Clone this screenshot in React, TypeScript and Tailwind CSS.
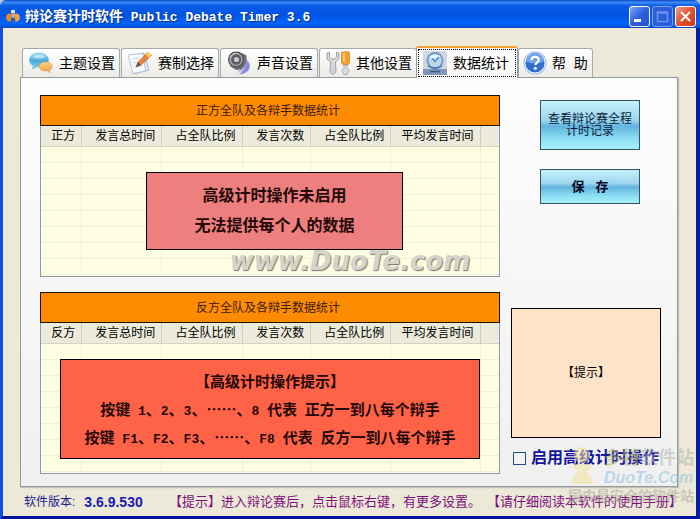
import type { ReactNode } from "react";

type TabDef = {
  id: string;
  label: string;
  icon: ReactNode;
};

const TABS: TabDef[] = [
  { id: "theme", label: "主题设置", icon: <ChatIcon /> },
  { id: "format", label: "赛制选择", icon: <NoteIcon /> },
  { id: "sound", label: "声音设置", icon: <SpeakerIcon /> },
  { id: "other", label: "其他设置", icon: <ToolsIcon /> },
  { id: "stats", label: "数据统计", icon: <ClockIcon /> },
  { id: "help", label: "帮  助", icon: <HelpIcon /> },
];

const ACTIVE_TAB = "stats";

const COLUMNS = ["发言总时间", "占全队比例", "发言次数", "占全队比例", "平均发言时间"];

function ChatIcon() {
  return (
    <svg viewBox="0 0 24 24" className="size-6 shrink-0" aria-hidden="true">
      <defs>
        <linearGradient id="chat-a" x1="0" y1="0" x2="0" y2="1">
          <stop offset="0" stopColor="#a8e2fa" />
          <stop offset="0.5" stopColor="#47a9dc" />
          <stop offset="1" stopColor="#8fd4f2" />
        </linearGradient>
        <linearGradient id="chat-b" x1="0" y1="0" x2="0" y2="1">
          <stop offset="0" stopColor="#fbd08a" />
          <stop offset="1" stopColor="#ec9a3c" />
        </linearGradient>
      </defs>
      <path d="M10 2C4.500 2 .5 5 .5 9c0 2.500 1.500 4.500 4 5.800L3.500 18l4.500-2.300c6.500.8 11.500-2 11.500-6.700C19.500 5 15.500 2 10 2z" fill="url(#chat-a)" stroke="#5fb0d6" strokeWidth=".6" />
      <path d="M4 6c2-2.500 9-3.500 12 0-3 2-9 2-12 0z" fill="#fff" opacity=".45" />
      <path d="M17 11c-4 0-7 2-7 4.500S13 20 17 20l1.500-.1 2.500 2.300-.3-3c1.500-.8 2.600-2.100 2.600-3.700C23.300 13 21 11 17 11z" fill="url(#chat-b)" stroke="#d99b50" strokeWidth=".5" />
    </svg>
  );
}

function NoteIcon() {
  return (
    <svg viewBox="0 0 24 24" className="size-6 shrink-0" aria-hidden="true">
      <path d="M1 5l15-3 5 17-15 4z" fill="#dfe8f6" stroke="#9aacc9" strokeWidth=".8" />
      <path d="M0 4l15-1.500L17.500 20 5 22.500z" fill="#f7faff" stroke="#a9b6ce" strokeWidth=".8" />
      <path d="M4 8l8-1M5 12l8-1M6 16l8-1" stroke="#cfdaec" strokeWidth="1" />
      <path d="M8 16l2-5L19.500 1.500l4 3L13 14z" fill="#e8853a" stroke="#b9602a" strokeWidth=".6" />
      <path d="M17.500 3.500l2-2 4 3-2.300 2.200z" fill="#f4d14e" />
      <path d="M8 16l2-5 3 3z" fill="#6b4a3a" />
    </svg>
  );
}

function SpeakerIcon() {
  return (
    <svg viewBox="0 0 24 24" className="size-6 shrink-0" aria-hidden="true">
      <path d="M20 9c5 5 4 13-8 14.500 4-3 6-7 8-14.500z" fill="#8d8ad8" />
      <path d="M17 10c3 4 1 10-7 12 3-3 5-6 7-12z" fill="#b9b6ee" />
      <path d="M11 .5l8 3.500c2 5 0 11-5 14.500L9 19 3 15z" fill="#6e6e72" />
      <ellipse cx="9" cy="8.500" rx="8" ry="8" fill="#4c4d51" />
      <ellipse cx="9" cy="8.500" rx="6.800" ry="6.800" fill="#a3a5a9" />
      <ellipse cx="9.200" cy="8.500" rx="5" ry="5.400" fill="#5c5d62" />
      <circle cx="9.500" cy="8.500" r="2.600" fill="#c9cbcf" />
      <path d="M3 7c1-3 4-5 8-4.500" stroke="#dcdde0" strokeWidth="1" fill="none" />
    </svg>
  );
}

function ToolsIcon() {
  return (
    <svg viewBox="0 0 24 24" className="size-6 shrink-0" aria-hidden="true">
      <path d="M1 2v6l3.500 3L4 20c0 4 6 4 6 0l-.5-9L13 8V2l-2.500-1v5L8.500 8h-3L3.500 6V1z" fill="#d5d8dc" stroke="#8e9399" strokeWidth=".8" />
      <circle cx="7" cy="19.500" r="1.200" fill="#fff" stroke="#8e9399" strokeWidth=".5" />
      <path d="M15.500 1.500c0-1 8-1 8 0V10c0 3-1.500 4-2.500 4h-3c-1 0-2.500-1-2.500-4z" fill="#f5a02a" stroke="#cf7a17" strokeWidth=".7" />
      <path d="M18 2v9" stroke="#ffd98e" strokeWidth="1.500" />
      <path d="M18 14h3v3l2 2.500-2 4h-3l-2-4 2-2.500z" fill="#dcdfe3" stroke="#90959b" strokeWidth=".7" />
    </svg>
  );
}

function ClockIcon() {
  return (
    <svg viewBox="0 0 24 24" className="size-6 shrink-0" aria-hidden="true">
      <rect width="24" height="24" rx="1" fill="#cfd6de" />
      <path d="M0 18h24v6H0z" fill="#7e97b8" />
      <path d="M7 20.500h10" stroke="#3c5880" strokeWidth="1.500" />
      <circle cx="12" cy="9.500" r="8.500" fill="#6c9ccc" />
      <circle cx="12" cy="9.500" r="6.600" fill="#b9d8ee" />
      <path d="M6 7c2-4 9-5 12-1-4 1-8 1-12 1z" fill="#e8f5fc" />
      <path d="M9 7.500l3 3 4-4.500" stroke="#5585b8" strokeWidth="1.300" fill="none" />
      <path d="M5 15c4 3 10 3 14 0" stroke="#47739f" strokeWidth="1.500" fill="none" />
    </svg>
  );
}

function HelpIcon() {
  return (
    <svg viewBox="0 0 24 24" className="size-6 shrink-0" aria-hidden="true">
      <circle cx="12" cy="12" r="11.500" fill="#9fbde6" />
      <circle cx="12" cy="12" r="10.500" fill="#fff" />
      <circle cx="12" cy="12" r="9.600" fill="#2f6fd0" />
      <path d="M3 10.500a9 9 0 0118 0c-5 2.500-13 2.500-18 0z" fill="#6fa4ea" />
      <path d="M8.500 9.300c.2-4.600 7.300-4.300 7.200-.3 0 2.500-3.300 2.600-3.300 5" stroke="#fff" strokeWidth="2.300" fill="none" />
      <circle cx="12.300" cy="17.300" r="1.500" fill="#fff" />
    </svg>
  );
}

function AppIcon() {
  return (
    <svg viewBox="0 0 14 14" className="size-3.5 shrink-0" aria-hidden="true">
      <path d="M5 1h4v3H5z" fill="#d9e2f0" />
      <circle cx="4" cy="8.500" r="3.900" fill="#e88a2c" />
      <circle cx="10" cy="8.500" r="3.900" fill="#f0a04a" />
      <path d="M7 3l2.500 9H4.500z" fill="#2e5fae" />
      <path d="M6.500 4h1.200v5H6.500z" fill="#dfeaf8" />
    </svg>
  );
}

/* 汉字与西文字号不同，按字符类型拆开 */
function MixedText({ text }: { text: string }) {
  return (
    <>
      {text.split(/([ -~]+)/).map((part, i) =>
        i % 2 === 1 ? (
          <span key={i} className="whitespace-pre font-['Liberation_Mono',monospace] text-[13px] leading-none">
            {part}
          </span>
        ) : (
          part
        ),
      )}
    </>
  );
}

function TitleBar() {
  const button = "flex size-[21px] items-center justify-center rounded-[3px] border border-white";
  return (
    <header className="flex h-7 items-center rounded-t-md bg-[linear-gradient(#0846c8_0%,#3f8cf6_8%,#0b5ce6_20%,#0054e3_55%,#0465fc_85%,#0347c9_100%)] pt-1 pr-1 pl-1.5">
      <AppIcon />
      <h1 className="ml-[5px] flex-1 truncate text-sm leading-6 font-bold text-white [text-shadow:1px_1px_1px_#0a2a80]">
        <MixedText text="辩论赛计时软件 Public Debate Timer 3.6" />
      </h1>
      <div className="flex gap-0.5">
        <button type="button" aria-label="最小化" className={`${button} bg-[linear-gradient(135deg,#7fa6f5,#2a5fe0_50%,#2453cf)]`}>
          <svg viewBox="0 0 19 19" className="size-full">
            <path d="M4 12h7v3H4z" fill="#fff" />
          </svg>
        </button>
        <button type="button" aria-label="最大化" disabled className="flex size-[21px] items-center justify-center rounded-[3px] border border-[#7f9fe6] bg-[#2a5cdc]">
          <svg viewBox="0 0 19 19" className="size-full">
            <path d="M4.500 5h10v9.500h-10zM4 6h11" fill="none" stroke="#6d92e8" strokeWidth="1.500" />
          </svg>
        </button>
        <button type="button" aria-label="关闭" className={`${button} bg-[linear-gradient(135deg,#f0a08a,#df5230_50%,#c93e1c)]`}>
          <svg viewBox="0 0 19 19" className="size-full">
            <path d="M5 5l9 9M14 5l-9 9" stroke="#fff" strokeWidth="2" />
          </svg>
        </button>
      </div>
    </header>
  );
}

function TabBar() {
  return (
    <div role="tablist" className="flex h-[31px] items-end pl-0.5">
      {TABS.map((tab) =>
        tab.id === ACTIVE_TAB ? (
          <button
            key={tab.id}
            type="button"
            role="tab"
            aria-selected="true"
            className="relative -mb-px -ml-0.5 flex h-8 items-stretch rounded-t-[3px] border-x border-t-2 border-x-[#919b9c] border-t-[#f0a030] bg-[#fcfcfc] p-px"
          >
            <span className="flex items-center gap-1.5 border border-dotted border-black px-1 pr-1.5 text-sm whitespace-pre">
              {tab.icon}
              {tab.label}
            </span>
          </button>
        ) : (
          <button
            key={tab.id}
            type="button"
            role="tab"
            aria-selected="false"
            className="mr-px flex h-[29px] items-center gap-1.5 rounded-t-[3px] border border-b-0 border-[#a3aaab] bg-linear-to-b from-white to-[#ecebe6] pr-1 pl-1.5 text-sm whitespace-pre last:mr-0 last:gap-[5px] last:pl-1"
          >
            {tab.icon}
            {tab.label}
          </button>
        ),
      )}
    </div>
  );
}

function StatsTable({
  side,
  title,
  children,
}: {
  side: string;
  title: string;
  children: ReactNode;
}) {
  return (
    <section className="relative">
      <h2 className="flex h-[31px] items-center justify-center border border-[#1c1008] bg-[#ff8c00] pr-1 text-xs text-[#3a1a10]">
        {title}
      </h2>
      <div className="border border-t-0 border-[#8a9aa8] bg-[#fdfee2] pb-px">
        <table className="w-full table-fixed border-separate border-spacing-0 text-xs">
          <colgroup>
            <col className="w-[9%]" />
            <col className="w-[17.500%]" />
            <col className="w-[17.500%]" />
            <col className="w-[15%]" />
            <col className="w-[17.500%]" />
            <col className="w-[19.500%]" />
            <col />
          </colgroup>
          <thead>
            <tr className="h-[21px] bg-[#ebeadb]">
              {[side, ...COLUMNS].map((name, i) => (
                <th key={i} className="border-r border-b border-r-[#cfcdbd] border-b-[#d6d3c0] p-0 pr-1.5 text-right leading-5 font-normal whitespace-nowrap">
                  {name}
                </th>
              ))}
              <td className="border-b border-[#d6d3c0] p-0" />
            </tr>
          </thead>
          <tbody>
            {Array.from({ length: 8 }, (_, row) => (
              <tr key={row} className="h-4">
                {Array.from({ length: 7 }, (_, col) => (
                  <td key={col} className="border-r border-b border-[#f0f0d8] p-0 last:border-r-0" />
                ))}
              </tr>
            ))}
          </tbody>
        </table>
      </div>
      {children}
    </section>
  );
}

function SiteMark() {
  return (
    <div className="pointer-events-none absolute right-1.5 bottom-3.5 flex flex-col items-end opacity-55" aria-hidden="true">
      <div className="flex items-center gap-2">
        <svg viewBox="0 0 26 40" className="h-10 w-7">
          <circle cx="13" cy="9" r="8" fill="#f3e3a0" />
          <path d="M2 38c0-6 4-9 7-13-4-1-5-4-5-7h18c0 3-1 6-5 7 3 4 7 7 7 13z" fill="#f3e3a0" />
        </svg>
        <div className="flex flex-col">
          <span className="text-lg leading-6 font-bold text-[#b5b5ad]">
            <span className="text-[#b9b96c]">多特</span>软件站
          </span>
          <span className="text-base leading-4 font-bold text-[#8fc3e0] italic">DuoTe.Com</span>
        </div>
      </div>
      <span className="text-sm leading-5 font-bold text-[#aaa9a2]">国内最安全的软件站</span>
    </div>
  );
}

export default function App() {
  return (
    <div
      lang="zh-CN"
      className="relative flex min-h-screen flex-col bg-[#b9c6dc] font-['Liberation_Sans','Noto_Sans_CJK_SC',sans-serif] text-black"
    >
      <TitleBar />
      <main className="flex flex-1 flex-col border-r-4 border-b-4 border-l-[3px] border-r-[#0a1f9c] border-b-[#00129a] border-l-[#0f4fdc] bg-[#ece9d8] pt-[18px] pr-[18px] pl-[17px]">
        <TabBar />
        <div className="flex flex-1 gap-[11px] border border-[#919b9c] bg-linear-to-b from-[#fdfdfd] to-[#f0f0f0] pt-[17px] pr-4 pb-3 pl-[19px] shadow-[1px_1px_1px_#c4c1b2]">
          <div className="flex min-w-0 flex-1 flex-col gap-[15px]">
            <StatsTable side="正方" title="正方全队及各辩手数据统计">
              <p className="absolute top-[77px] right-[21%] left-[23%] flex flex-col items-center border border-black bg-[#ee7f7f] py-2 text-base leading-[30px] font-bold whitespace-nowrap text-[#240808]">
                <span>高级计时操作未启用</span>
                <span>无法提供每个人的数据</span>
              </p>
              <p className="pointer-events-none absolute inset-x-0 bottom-0 pl-40 text-center font-['DejaVu_Sans',sans-serif] text-[26px] leading-8 font-bold text-[#d4d4cc] italic [text-shadow:1px_1px_1px_#77776f]">
                www.DuoTe.com
              </p>
            </StatsTable>
            <StatsTable side="反方" title="反方全队及各辩手数据统计">
              <p className="absolute inset-x-5 top-[67px] flex flex-col items-center border border-black bg-[#ff6347] py-[7px] font-['Noto_Sans_CJK_SC',sans-serif] text-[15px] leading-7 font-bold whitespace-nowrap text-[#240808]">
                <span>【高级计时操作提示】</span>
                <span>
                  <MixedText text="按键 1、2、3、……、8 代表 正方一到八每个辩手" />
                </span>
                <span>
                  <MixedText text="按键 F1、F2、F3、……、F8 代表 反方一到八每个辩手" />
                </span>
              </p>
            </StatsTable>
          </div>
          <aside className="flex w-[150px] shrink-0 flex-col pt-[5px]">
            <button
              type="button"
              className="ml-[29px] h-[50px] w-[100px] border border-[#35535f] bg-[linear-gradient(#c4f0fb_0%,#9fd6ef_40%,#62b4de_52%,#8fe0f5_80%,#a5f0fc_100%)] text-xs leading-3 text-[#0c1c3c]"
            >
              查看辩论赛全程
              <br />
              计时记录
            </button>
            <button
              type="button"
              className="mt-[19px] ml-[29px] h-[35px] w-[100px] border border-[#35535f] bg-[linear-gradient(#c4f0fb_0%,#9fd6ef_40%,#62b4de_52%,#8fe0f5_80%,#a5f0fc_100%)] text-[13px] font-bold whitespace-pre text-[#04081c]"
            >
              保   存
            </button>
            <div className="mt-auto flex h-[130px] items-center justify-center border border-black bg-[#fde4c8] text-xs">
              【提示】
            </div>
            <label className="mt-2 mb-1 flex items-center gap-[5px] pl-0.5 text-base leading-6 font-bold whitespace-nowrap text-[#14149c]">
              <input type="checkbox" className="size-[13px] shrink-0 appearance-none border border-[#1c5180] bg-[#f3f3ef]" />
              启用高级计时操作
            </label>
          </aside>
        </div>
        <footer className="flex h-[29px] items-center justify-between pl-1 whitespace-nowrap">
          <div className="flex items-center text-xs text-[#1c1c90]">
            软件版本:
            <strong className="ml-[9px] text-sm text-[#1a1ab4]">3.6.9.530</strong>
          </div>
          <p className="-mr-1 flex gap-1.5 text-[13px] text-[#80107c]">
            <span>【提示】进入辩论赛后，点击鼠标右键，有更多设置。</span>
            <span>【请仔细阅读本软件的使用手册】</span>
          </p>
        </footer>
      </main>
      <SiteMark />
    </div>
  );
}
